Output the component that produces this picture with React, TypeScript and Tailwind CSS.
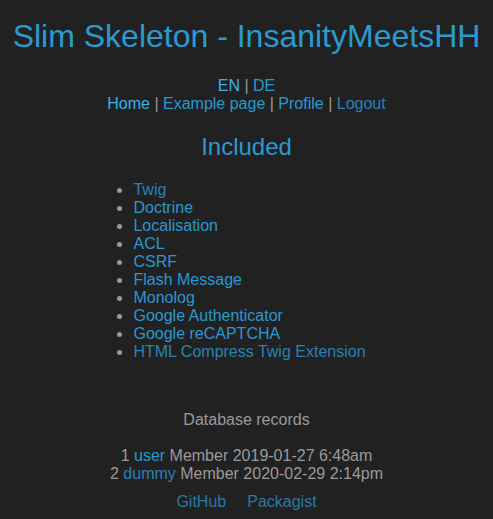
import React from 'react';

const items = [
  'Twig',
  'Doctrine',
  'Localisation',
  'ACL',
  'CSRF',
  'Flash Message',
  'Monolog',
  'Google Authenticator',
  'Google reCAPTCHA',
  'HTML Compress Twig Extension',
];

const Sep = () => <span className="text-[#9a9a9a]"> | </span>;

const App: React.FC = () => {
  return (
    <div className="min-h-screen bg-[#212121] text-[#9a9a9a] text-center text-[16px] leading-[18px] font-['Liberation_Sans',Arial,sans-serif]">
      <h1 className="pt-[17px] pb-[22px] text-[32px] leading-[38px] text-[#2a9ad0]">
        Slim Skeleton - InsanityMeetsHH
      </h1>
      <div>
        <a className="text-[#38b2ea]">EN</a>
        <Sep />
        <a className="text-[#2a98d0]">DE</a>
      </div>
      <div>
        <a className="text-[#38b2ea]">Home</a>
        <Sep />
        <a className="text-[#2a98d0]">Example page</a>
        <Sep />
        <a className="text-[#2a98d0]">Profile</a>
        <Sep />
        <a className="text-[#2a82b5]">Logout</a>
      </div>
      <h2 className="mt-[20px] mb-[20px] text-[24px] leading-[28px] text-[#2a9ad0]">Included</h2>
      <ul className="inline-block text-left list-disc pl-10 pr-[34px] marker:text-[#9a9a9a]">
        {items.map((item, i) => (
          <li key={item}>
            <a className={i === 0 || i === items.length - 1 ? 'text-[#2a82b5]' : 'text-[#2a98d0]'}>{item}</a>
          </li>
        ))}
      </ul>
      <p className="mt-[50px]">Database records</p>
      <div className="mt-[18px]">
        <div>
          1 <a className="text-[#2a98d0]">user</a> Member 2019-01-27 6:48am
        </div>
        <div>
          2 <a className="text-[#2a82b5]">dummy</a> Member 2020-02-29 2:14pm
        </div>
      </div>
      <div className="mt-[10px] flex justify-center gap-[21px]">
        <a className="text-[#2a7aa8]">GitHub</a>
        <a className="text-[#2a7aa8]">Packagist</a>
      </div>
    </div>
  );
};

export default App;
